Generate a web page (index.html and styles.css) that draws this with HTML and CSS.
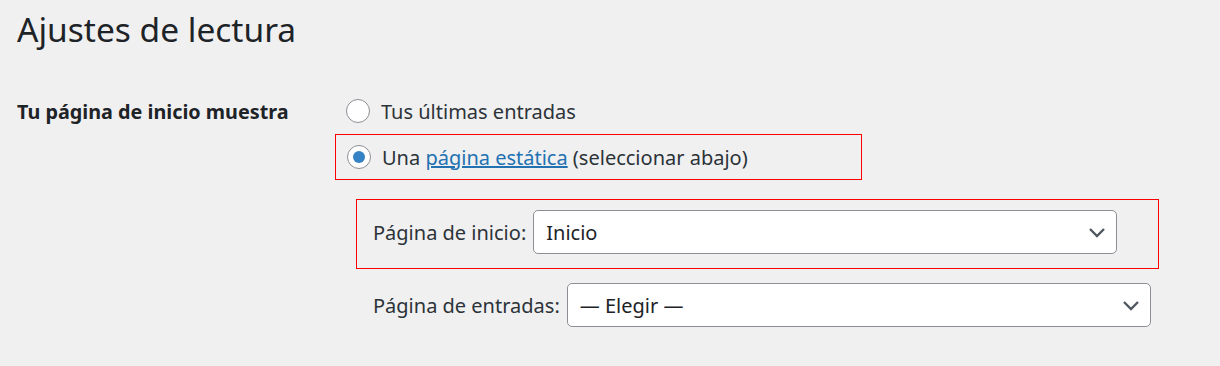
FILE: index.html
```html
<!DOCTYPE html>
<html lang="es">
<head>
    <meta charset="UTF-8">
    <title>Ajustes de lectura</title>
    <link rel="stylesheet" href="styles.css">
</head>
<body>
    <div class="wrap">
        <h1>Ajustes de lectura</h1>

        <div class="form-row">
            <div class="row-label">Tu página de inicio muestra</div>
            <div class="row-field">
                <label class="option">
                    <input type="radio" name="show_on_front" value="posts">
                    <span>Tus últimas entradas</span>
                </label>
                <label class="option highlight">
                    <input type="radio" name="show_on_front" value="page" checked>
                    <span>Una <a href="#">página estática</a> (seleccionar abajo)</span>
                </label>

                <div class="page-select highlight-box">
                    <span class="select-label">Página de inicio:</span>
                    <div class="select">
                        <span>Inicio</span>
                        <svg width="18" height="12" viewBox="0 0 18 12"><path d="M2 3 L9 10 L16 3" fill="none" stroke="#50575e" stroke-width="2.4"/></svg>
                    </div>
                </div>

                <div class="page-select plain">
                    <span class="select-label">Página de entradas:</span>
                    <div class="select">
                        <span>— Elegir —</span>
                        <svg width="18" height="12" viewBox="0 0 18 12"><path d="M2 3 L9 10 L16 3" fill="none" stroke="#50575e" stroke-width="2.4"/></svg>
                    </div>
                </div>
            </div>
        </div>
    </div>
</body>
</html>
```

FILE: styles.css
```css
body {
    margin: 0;
    padding: 0;
    background: #f0f0f1;
    color: #1d2327;
    font-family: 'Noto Sans', sans-serif;
    font-size: 20px;
}

.wrap {
    padding: 0 0 0 17px;
}

h1 {
    margin: 0;
    padding-top: 5px;
    font-size: 33.5px;
    font-weight: 400;
    line-height: 48px;
    color: #1d2327;
}

.form-row {
    display: flex;
    margin-top: 36px;
}

.row-label {
    width: 318px;
    flex-shrink: 0;
    font-weight: 700;
    font-size: 19.8px;
    line-height: 26px;
    padding-top: 10px;
}

.row-field {
    display: flex;
    flex-direction: column;
    align-items: flex-start;
}

.option {
    display: flex;
    align-items: center;
    gap: 11px;
    padding-left: 11px;
    height: 44px;
    margin-bottom: 1px;
    color: #2c3338;
}

.option input {
    appearance: none;
    -webkit-appearance: none;
    margin: 0;
    width: 24px;
    height: 24px;
    border: 1px solid #8c8f94;
    border-radius: 50%;
    background: #fff;
    display: grid;
    place-content: center;
}

.option input:checked::before {
    content: "";
    width: 12px;
    height: 12px;
    border-radius: 50%;
    background: #3582c4;
}

.option a {
    color: #2271b1;
}

.highlight {
    border: 1px solid #ff0000;
    width: 514px;
    margin-bottom: 0;
}

.page-select {
    display: flex;
    align-items: center;
    gap: 7px;
    color: #2c3338;
}

.highlight-box {
    margin-top: 19px;
    margin-left: 21px;
    width: 785px;
    height: 64px;
    padding: 0 0 4px 16px;
    border: 1px solid #ff0000;
}

.plain {
    margin-top: 14px;
    margin-left: 38px;
}

.select {
    box-sizing: border-box;
    width: 584px;
    height: 44px;
    border: 1px solid #8c8f94;
    border-radius: 5px;
    background: #fff;
    display: flex;
    align-items: center;
    justify-content: space-between;
    padding: 0 10px 0 12px;
    color: #1d2327;
}
```
